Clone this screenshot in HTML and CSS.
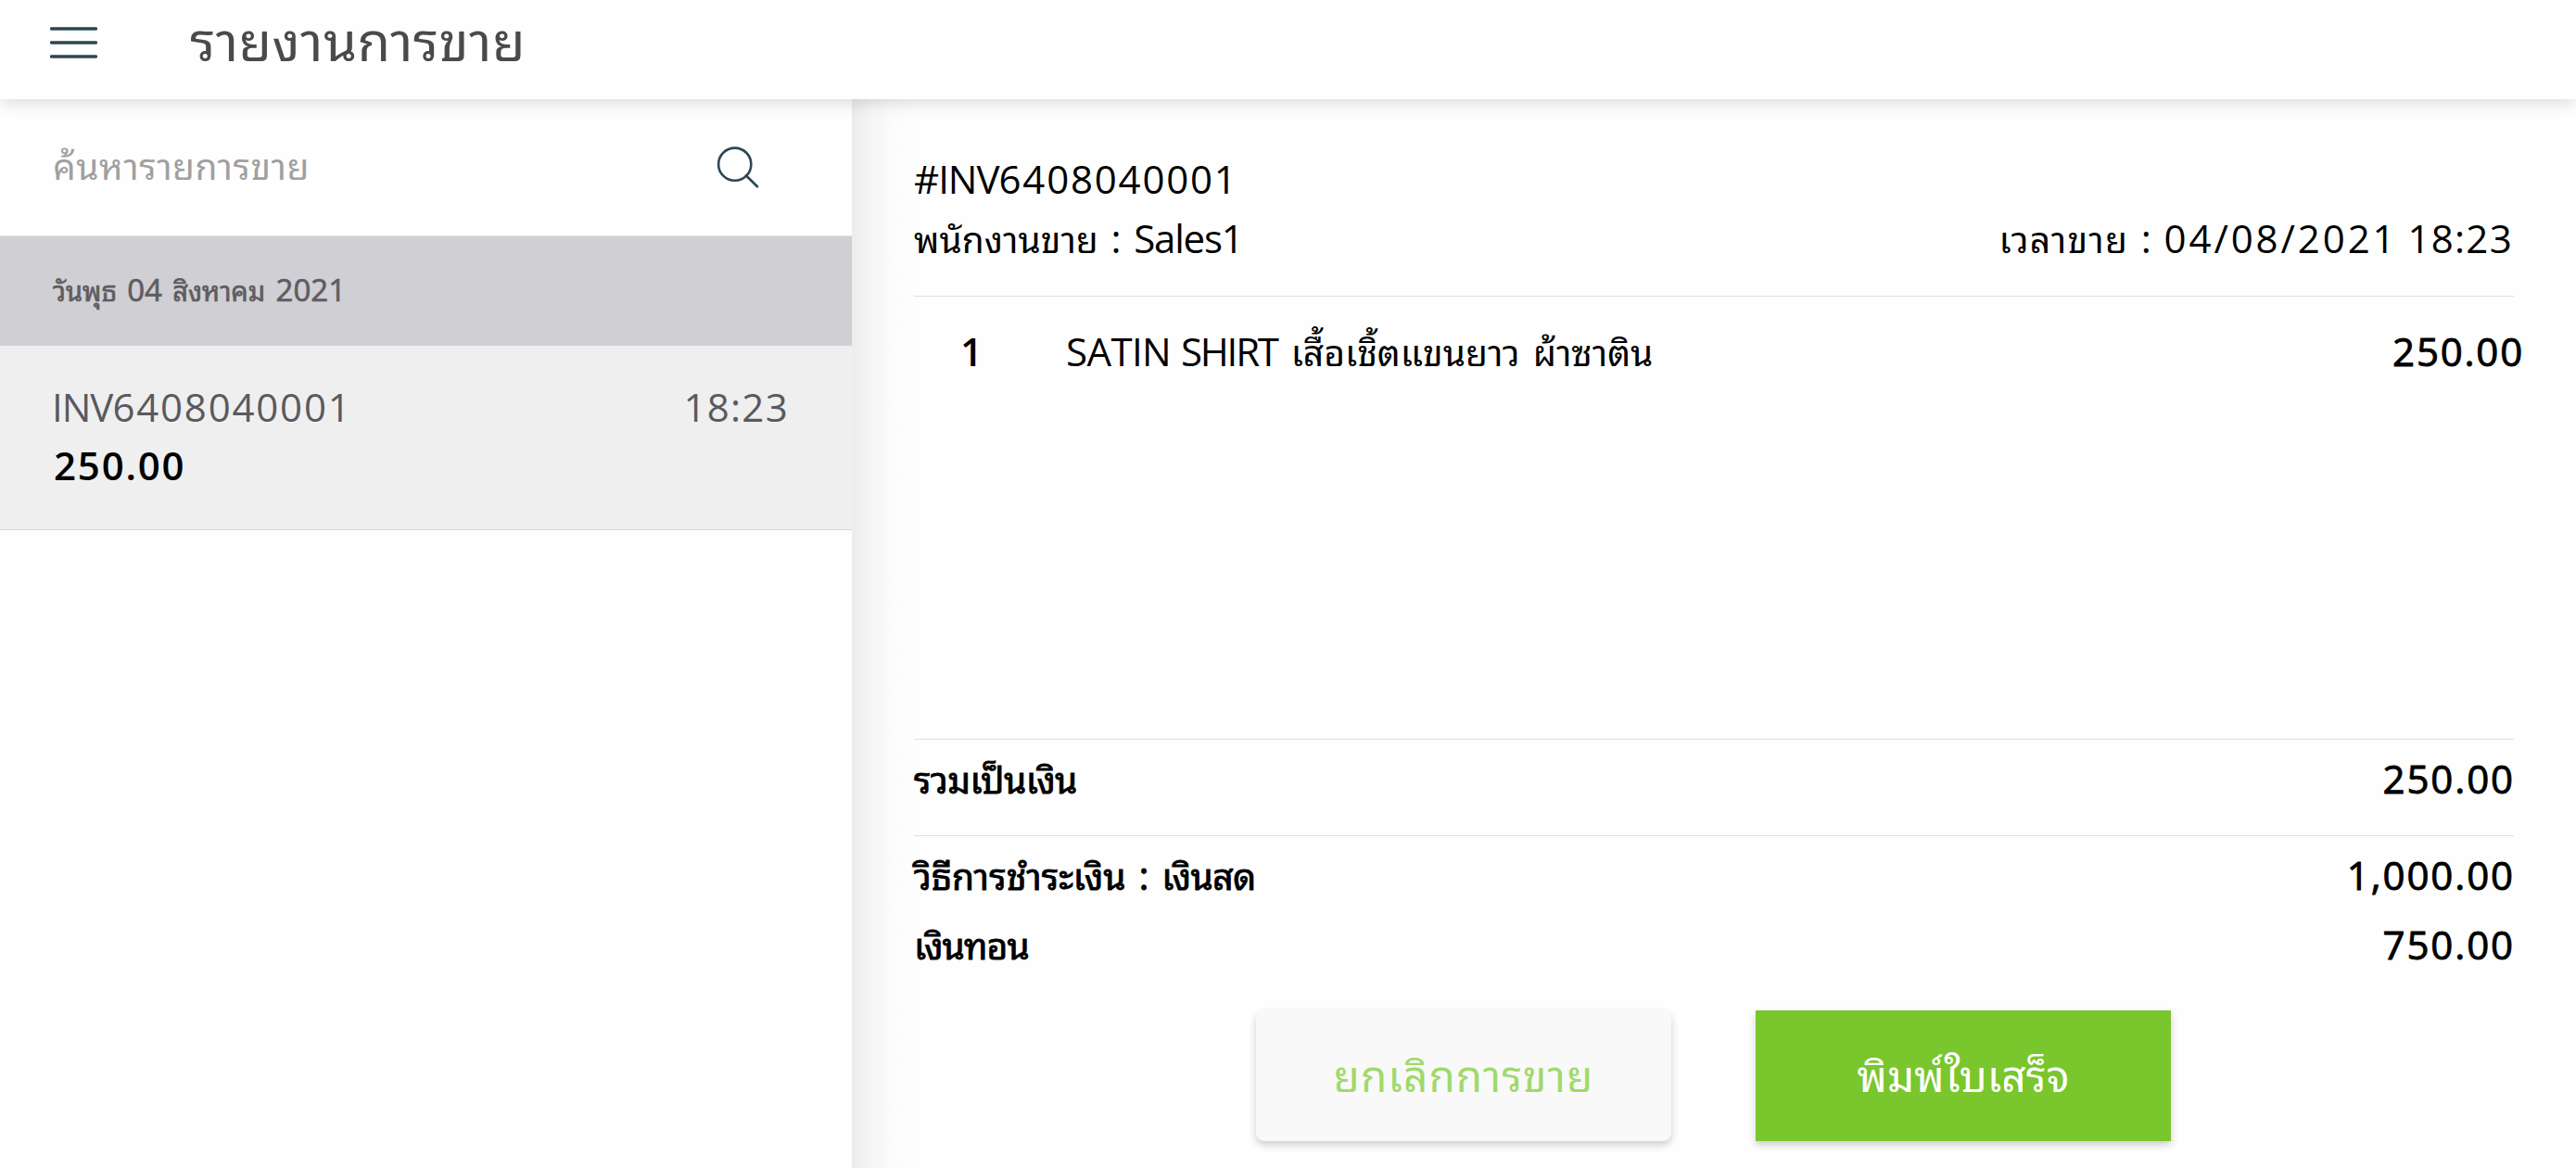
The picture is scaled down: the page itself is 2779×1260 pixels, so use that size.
FILE: index.html
```
<!DOCTYPE html>
<html lang="th">
<head>
<meta charset="utf-8">
<title>รายงานการขาย</title>
<link rel="stylesheet" href="styles.css">
</head>
<body>
<header class="topbar">
  <svg class="menu" width="51" height="34" viewBox="0 0 51 34"><path d="M1.5 2H49.5M1.5 17H49.5M1.5 32H49.5"/></svg>
  <h1 class="title">รายงานการขาย</h1>
</header>
<main class="content">
  <aside class="sidebar">
    <div class="search">
      <span class="placeholder">ค้นหารายการขาย</span>
      <svg class="glass" width="48" height="48" viewBox="0 0 48 48"><circle cx="20.7" cy="20.2" r="17.6"/><path d="M33 32.5L45 44.3"/></svg>
    </div>
    <div class="day"><span class="th">วันพุธ</span> 04 <span class="th">สิงหาคม</span> 2021</div>
    <div class="sale">
      <div class="row"><span class="sale-no"><span class="prefix">INV</span><span class="digits">6408040001</span></span><span class="clock">18:23</span></div>
      <div class="sale-total">250.00</div>
    </div>
  </aside>
  <section class="detail">
    <div class="info">
      <div class="row"><span class="receipt-no"><span class="prefix">#INV</span><span class="digits">6408040001</span></span></div>
      <div class="row">
        <span><span class="th">พนักงานขาย</span><span class="colon"> : </span><span class="seller">Sales1</span></span>
        <span class="sold-at"><span class="th wide">เวลาขาย</span><span class="colon"> : </span><span class="date">04/08/2021</span> <span class="clock">18:23</span></span>
      </div>
    </div>
    <div class="items">
      <div class="item">
        <span class="qty">1</span>
        <span class="name"><span class="satin">SATIN</span> <span class="shirt">SHIRT</span><span class="gap"> </span><span class="th">เสื้อเชิ้ตแขนยาว<span class="gap"> </span>ผ้าซาติน</span></span>
        <span class="price">250.00</span>
      </div>
    </div>
    <div class="sum row strong"><span class="th">รวมเป็นเงิน</span><span class="amount">250.00</span></div>
    <div class="payment">
      <div class="row strong"><span><span class="th method">วิธีการชำระเงิน</span><span class="colon"> : </span><span class="th">เงินสด</span></span><span class="amount">1,000.00</span></div>
      <div class="row strong"><span class="th change">เงินทอน</span><span class="amount">750.00</span></div>
    </div>
    <div class="actions">
      <button class="btn cancel">ยกเลิกการขาย</button>
      <button class="btn print">พิมพ์ใบเสร็จ</button>
    </div>
  </section>
</main>
</body>
</html>
```
FILE: styles.css
```
* { box-sizing: border-box; }
body {
  margin: 0;
  height: 1260px;
  display: flex;
  flex-direction: column;
  overflow: hidden;
  background: #fefefe;
  color: #000;
  font: 400 42px/64px "Open Sans", "Noto Sans Thai Looped", "Noto Sans Thai", sans-serif;
  white-space: nowrap;
}
svg { fill: none; stroke: #2d4654; stroke-linecap: round; flex: none; }
.th { font-size: 39px; line-height: 1; }
.row { display: flex; justify-content: space-between; align-items: baseline; }
.strong { -webkit-text-stroke: 0.9px currentColor; }
.strong .th { letter-spacing: -0.5px; }
.strong .method { letter-spacing: 0.1px; }
.colon { word-spacing: 2.8px; }
.gap { word-spacing: 4px; }

.topbar {
  position: relative;
  z-index: 1;
  flex: none;
  height: 107px;
  padding: 0 0 19px 54px;
  display: flex;
  align-items: center;
  gap: 100px;
  background: #fefefe;
  box-shadow: 0 2px 18px rgba(0, 0, 0, 0.17);
}
.menu { stroke-width: 3.4; margin-top: 4px; }
.title { margin: 0; font-size: 58px; font-weight: 400; letter-spacing: 0.4px; color: #4a4a4a; }

.content { flex: 1; min-height: 0; display: flex; }
.sidebar { flex: none; width: 919px; }
.search {
  height: 148px;
  padding: 0 99px 3px 57px;
  display: flex;
  align-items: center;
  justify-content: space-between;
  border-bottom: 1px solid #e2e2e4;
}
.placeholder { font-size: 39px; letter-spacing: 0.5px; color: #a0a0a0; }
.glass { stroke-width: 2.6; margin-top: 3px; }
.day {
  height: 118px;
  padding: 26px 57px 0;
  background: #d0cfd4;
  color: #5e5d61;
  font-size: 33px;
  letter-spacing: 0;
  word-spacing: 2.8px;
  -webkit-text-stroke: 0.7px currentColor;
}
.day .th { font-size: 29px; letter-spacing: 0; }
.sale { height: 199px; padding: 34px 68px 0 56px; background: #efefef; border-bottom: 1px solid #d9d9db; }
.sale .row { color: #5a5960; }
.sale-total { padding-left: 2px; margin-top: -1px; font-weight: 600; letter-spacing: 1.8px; }
.prefix { letter-spacing: -1px; }
.digits { letter-spacing: 1.8px; }
.clock { letter-spacing: 1.3px; }

.detail {
  flex: 1;
  display: flex;
  flex-direction: column;
  padding: 54px 67px 0;
  background: linear-gradient(90deg, #ececec, #f6f6f6 22px, #fcfcfc 48px, #fefefe 72px);
}
.info { height: 159px; border-bottom: 1px solid #e0e0e0; }
.seller { letter-spacing: -1.2px; }
.sold-at { margin-right: 1px; }
.wide { letter-spacing: 1.2px; }
.date { letter-spacing: 2.9px; }
.items { flex: 1; padding-top: 27px; }
.item { display: flex; align-items: baseline; margin-right: -11px; }
.qty { width: 164px; padding-left: 50px; font-weight: 600; }
.name { flex: 1; }
.satin { letter-spacing: -0.6px; }
.shirt { letter-spacing: -2.2px; }
.price { font-weight: 500; letter-spacing: 1.8px; -webkit-text-stroke: 0.9px currentColor; }
.sum, .payment { border-top: 1px solid #e0e0e0; line-height: 75px; }
.sum { height: 104px; padding-top: 4px; }
.payment { height: 189px; padding-top: 4px; }
.amount { letter-spacing: 1.9px; margin-right: -1px; }
.strong .change { letter-spacing: -0.9px; }
.actions { height: 170px; padding-left: 369px; display: flex; align-items: flex-start; gap: 91px; }
.btn {
  width: 448px;
  height: 141px;
  padding: 0 0 2px;
  border: 0;
  font: 400 46px/64px "Open Sans", "Noto Sans Thai Looped", "Noto Sans Thai", sans-serif;
  box-shadow: 0 4px 8px rgba(0, 0, 0, 0.2);
}
.cancel { border-radius: 9px; background: #f9f9f9; color: #9fd96b; letter-spacing: 1.1px; }
.print { background: #79c62d; color: #fff; letter-spacing: 0.1px; }
```
